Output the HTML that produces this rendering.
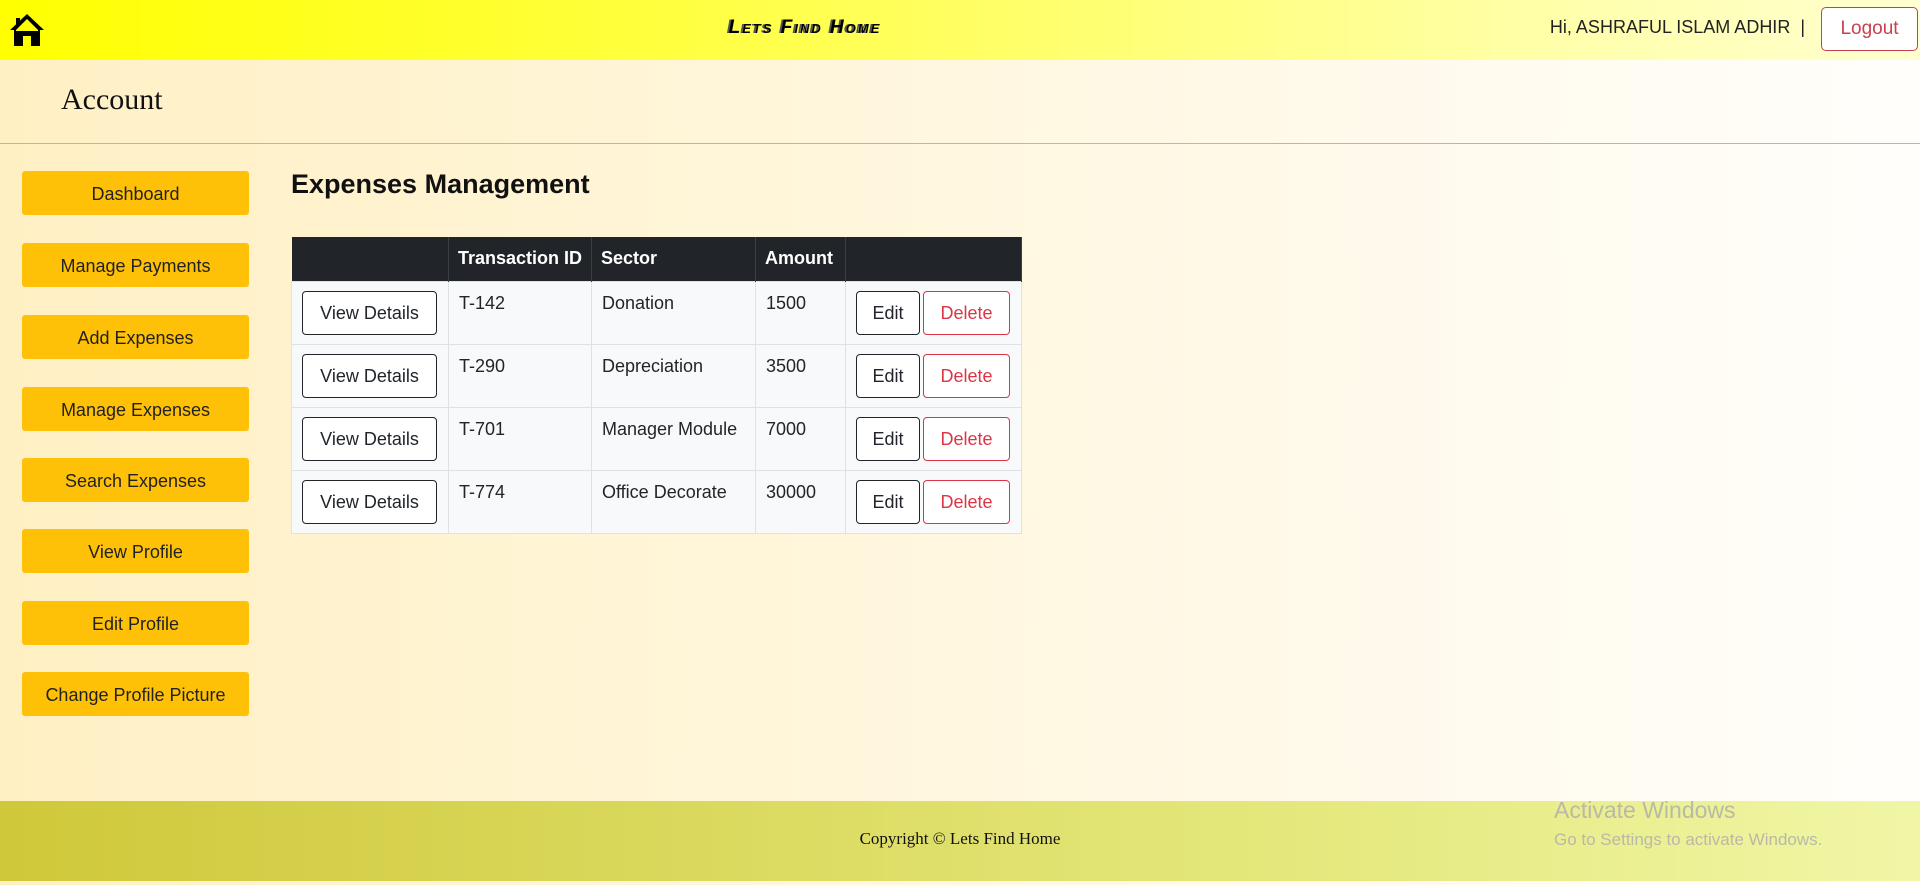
<!DOCTYPE html>
<html><head><meta charset="utf-8"><style>
*{box-sizing:border-box;margin:0;padding:0}
body{width:1920px;height:885px;overflow:hidden;font-family:"Liberation Sans",sans-serif;background:linear-gradient(90deg,#fff0c4,#fffefb);position:relative;color:#212529}
.hdr{position:absolute;left:0;top:0;width:1920px;height:60px;background:linear-gradient(90deg,#ffff00 0%,#ffff40 35%,#ffffa8 80%,#ffffd0 100%)}
.logo{position:absolute;left:680px;top:17px;width:250px;text-align:center;font-weight:900;font-style:italic;font-size:19px;letter-spacing:2px;font-variant:small-caps;color:#000;text-shadow:-2px 0 0 #555}
.hi{position:absolute;right:115px;top:17px;font-size:18px;color:#222;white-space:nowrap}
.lo{position:absolute;left:1821px;top:7px;width:97px;height:44px;border:1px solid #c8414f;border-radius:5px;color:#c8414f;font-size:19px;text-align:center;line-height:42px;background:#fff}
.acc{position:absolute;left:0;top:60px;width:1920px;height:84px;border-bottom:1px solid #bbb6a8}
.acc span{position:absolute;left:61px;top:23px;font-family:"Liberation Serif",serif;font-size:30px;color:#111}
.sb{position:absolute;left:22px;width:227px;height:44px;background:#ffc107;border-radius:3px;text-align:center;line-height:46px;font-size:18px;color:#222;white-space:nowrap}
h2{position:absolute;left:291px;top:169px;font-size:27px;font-weight:bold;color:#111}
table{position:absolute;left:291px;top:237px;width:730px;border-collapse:collapse;font-size:18px;table-layout:fixed}
th{background:#212529;color:#fff;height:44px;text-align:left;padding:0 9px;border-right:1px solid #3a3f44;font-size:18px;white-space:nowrap}
td{background:#f8f9fa;height:63px;vertical-align:top;padding:11px 10px 0;border:1px solid #dee2e6;white-space:nowrap}
td.b{padding:9px 10px 0}
.btn{display:inline-block;height:44px;line-height:42px;border:1px solid #212529;border-radius:4px;text-align:center;background:#fff;vertical-align:top}
.del{border-color:#dc3545;color:#dc3545;margin-left:3px}
.ft{position:absolute;left:0;top:801px;width:1920px;height:80px;background:linear-gradient(90deg,#cfc83a,#e5e97f 70%,#f1f6a6)}
.ft span{position:absolute;left:0;width:1920px;text-align:center;top:28px;font-family:"Liberation Serif",serif;font-size:17px;color:#111}
.aw{position:absolute;left:1554px;top:797px;color:#b9b9a8;font-size:23px}
.aw2{position:absolute;left:1554px;top:830px;color:#b9b9a8;font-size:17px}
</style></head><body>
<div class="hdr">
<svg style="position:absolute;left:8px;top:12px" width="38" height="36" viewBox="0 0 38 36"><path d="M19 2 L2 18 L6 18 L6 34 L15 34 L15 24 L23 24 L23 34 L32 34 L32 18 L36 18 Z" fill="#000"/><path d="M19 7 L8 18 L8 19 L30 19 L30 18 Z" fill="#ffff00"/><rect x="8" y="6" width="4" height="8" fill="#000"/></svg>
<div class="logo">Lets Find Home</div>
<div class="hi">Hi, ASHRAFUL ISLAM ADHIR &nbsp;|</div>
<div class="lo">Logout</div>
</div>
<div class="acc"><span>Account</span></div>
<div class="sb" style="top:171px">Dashboard</div>
<div class="sb" style="top:243px">Manage Payments</div>
<div class="sb" style="top:315px">Add Expenses</div>
<div class="sb" style="top:387px">Manage Expenses</div>
<div class="sb" style="top:458px">Search Expenses</div>
<div class="sb" style="top:529px">View Profile</div>
<div class="sb" style="top:601px">Edit Profile</div>
<div class="sb" style="top:672px">Change Profile Picture</div>
<h2>Expenses Management</h2>
<table>
<colgroup><col style="width:157px"><col style="width:143px"><col style="width:164px"><col style="width:90px"><col style="width:176px"></colgroup>
<tr><th></th><th>Transaction ID</th><th>Sector</th><th>Amount</th><th></th></tr>
<tr><td class="b"><span class="btn" style="width:135px">View Details</span></td><td>T-142</td><td>Donation</td><td>1500</td><td class="b"><span class="btn" style="width:64px">Edit</span><span class="btn del" style="width:87px">Delete</span></td></tr>
<tr><td class="b"><span class="btn" style="width:135px">View Details</span></td><td>T-290</td><td>Depreciation</td><td>3500</td><td class="b"><span class="btn" style="width:64px">Edit</span><span class="btn del" style="width:87px">Delete</span></td></tr>
<tr><td class="b"><span class="btn" style="width:135px">View Details</span></td><td>T-701</td><td>Manager Module</td><td>7000</td><td class="b"><span class="btn" style="width:64px">Edit</span><span class="btn del" style="width:87px">Delete</span></td></tr>
<tr><td class="b"><span class="btn" style="width:135px">View Details</span></td><td>T-774</td><td>Office Decorate</td><td>30000</td><td class="b"><span class="btn" style="width:64px">Edit</span><span class="btn del" style="width:87px">Delete</span></td></tr>
</table>
<div class="ft"><span>Copyright © Lets Find Home</span></div>
<div class="aw">Activate Windows</div>
<div class="aw2">Go to Settings to activate Windows.</div>
</body></html>
